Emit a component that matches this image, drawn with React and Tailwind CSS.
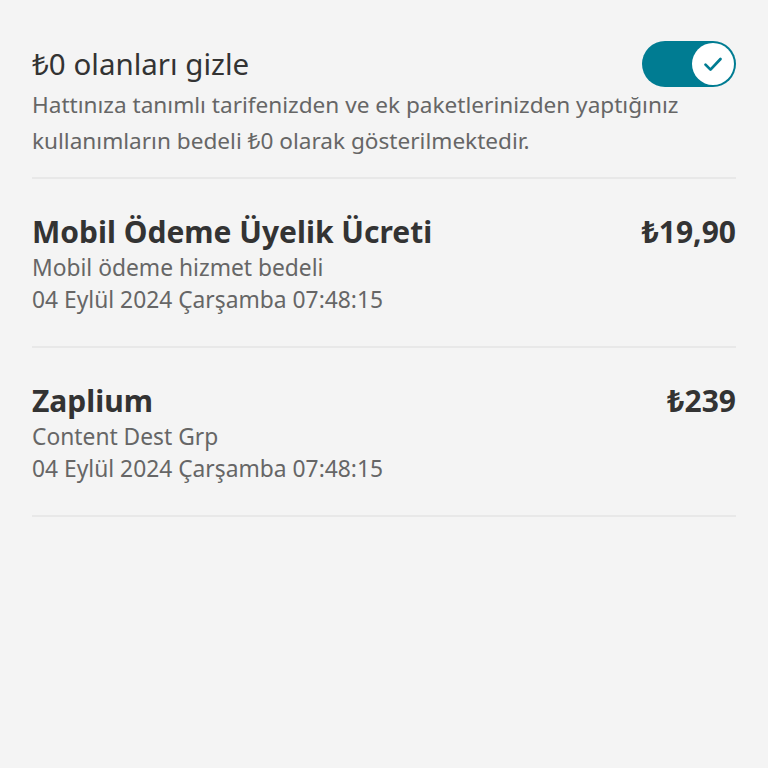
import React, { useState } from "react";

const items = [
  {
    title: "Mobil Ödeme Üyelik Ücreti",
    sub: "Mobil ödeme hizmet bedeli",
    date: "04 Eylül 2024 Çarşamba 07:48:15",
    amount: "₺19,90",
  },
  {
    title: "Zaplium",
    sub: "Content Dest Grp",
    date: "04 Eylül 2024 Çarşamba 07:48:15",
    amount: "₺239",
  },
];

const Toggle = ({ on, onChange }) => (
  <button
    type="button"
    onClick={() => onChange(!on)}
    className={`w-[94px] h-[46px] rounded-full flex items-center px-[2px] shrink-0 ${
      on ? "bg-[#007c92] justify-end" : "bg-[#bebebe] justify-start"
    }`}
  >
    <span className="w-[42px] h-[42px] rounded-full bg-white flex items-center justify-center">
      {on && (
        <svg width="30" height="30" viewBox="0 0 24 24" fill="none">
          <path
            d="M6 12.5l4 4L18 8"
            stroke="#007c92"
            strokeWidth="2.2"
            strokeLinecap="round"
            strokeLinejoin="round"
          />
        </svg>
      )}
    </span>
  </button>
);

export default function App() {
  const [hideZero, setHideZero] = useState(true);

  return (
    <div
      className="min-h-screen bg-[#f4f4f4] px-8 pt-[41px] text-[#333333]"
      style={{ fontFamily: '"Noto Sans", "DejaVu Sans", sans-serif' }}
    >
      <div className="flex items-start justify-between">
        <h2 className="text-[29.5px] leading-[46px]">₺0 olanları gizle</h2>
        <Toggle on={hideZero} onChange={setHideZero} />
      </div>
      <p className="text-[22.6px] leading-[36px] text-[#666666] pb-[18px]">
        Hattınıza tanımlı tarifenizden ve ek paketlerinizden yaptığınız
        kullanımların bedeli ₺0 olarak gösterilmektedir.
      </p>

      {items.map((it) => (
        <div
          key={it.title}
          className="border-t-2 border-[#e8e8e8] pt-[33px] pb-[30px] flex justify-between"
        >
          <div className="flex flex-col">
            <span className="text-[30px] leading-[40px] font-bold">{it.title}</span>
            <span className="text-[22.8px] leading-[32px] text-[#666666]">{it.sub}</span>
            <span className="text-[22.8px] leading-[32px] text-[#666666]">{it.date}</span>
          </div>
          <span className="text-[30px] leading-[40px] font-bold">{it.amount}</span>
        </div>
      ))}
      <div className="border-t-2 border-[#e8e8e8]" />
    </div>
  );
}
